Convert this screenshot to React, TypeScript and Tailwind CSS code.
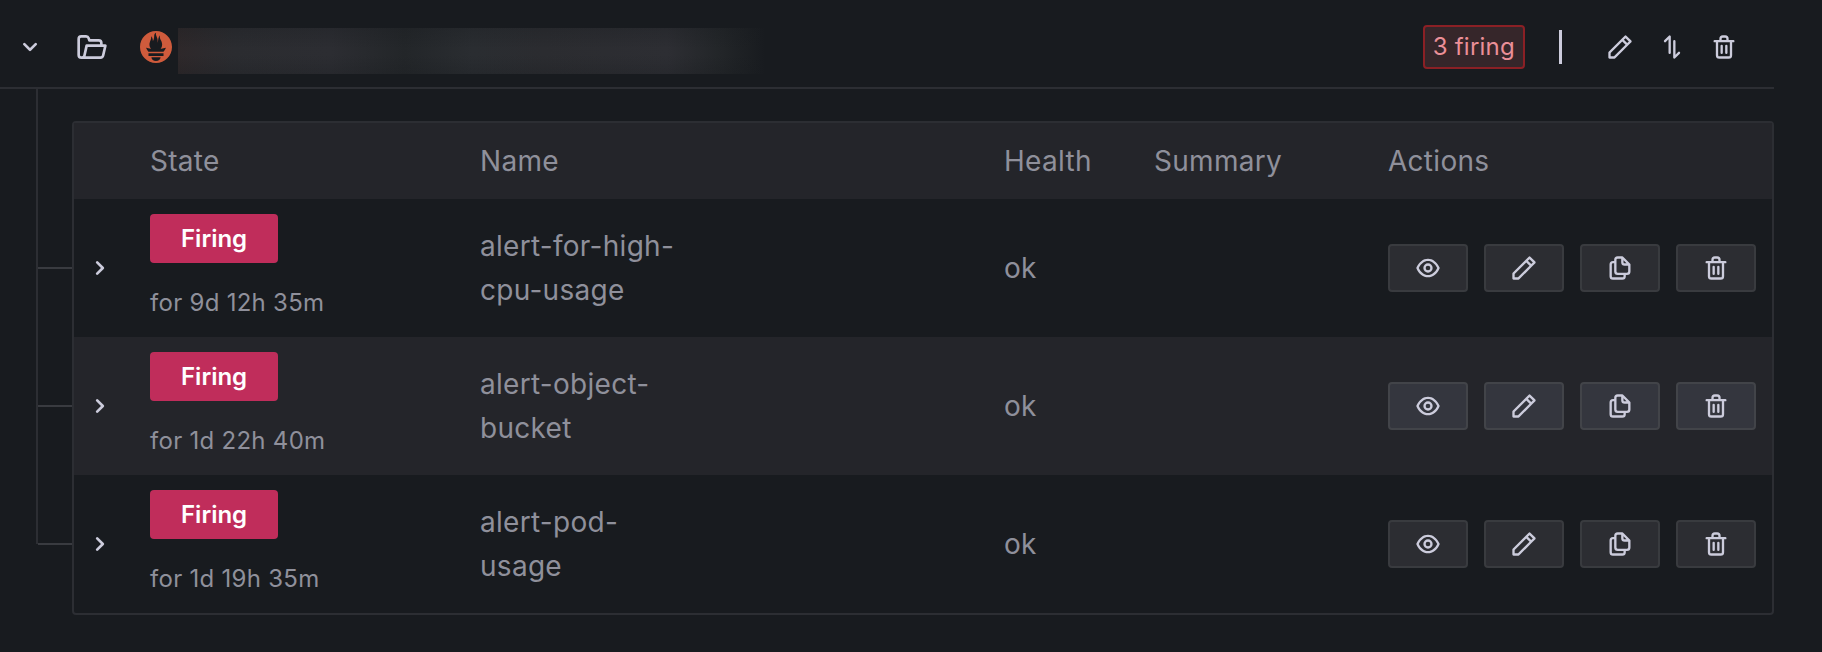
import React from "react";
import { SiPrometheus } from "react-icons/si";

const ICONS = {
  angleDown:
    "M17,9.17a1,1,0,0,0-1.41,0L12,12.71,8.46,9.17a1,1,0,0,0-1.41,0,1,1,0,0,0,0,1.42l4.24,4.24a1,1,0,0,0,1.42,0L17,10.59A1,1,0,0,0,17,9.17Z",
  angleRight:
    "M14.83,11.29,10.59,7.05a1,1,0,0,0-1.42,0,1,1,0,0,0,0,1.41L12.71,12,9.17,15.54a1,1,0,0,0,0,1.41,1,1,0,0,0,.71.29,1,1,0,0,0,.71-.29l4.24-4.24A1,1,0,0,0,14.83,11.29Z",
  folderOpen:
    "M22.78,10.37A1,1,0,0,0,22,10H20V9a3,3,0,0,0-3-3H10.72l-.31-1A3,3,0,0,0,7.56,3H4A3,3,0,0,0,1,6V18a3,3,0,0,0,3,3H18.4a3,3,0,0,0,2.92-2.35L23,11.22A1,1,0,0,0,22.78,10.37ZM5.37,18.22a1,1,0,0,1-1,.78H4a1,1,0,0,1-1-1V6A1,1,0,0,1,4,5H7.56a1,1,0,0,1,.95.68l.54,1.64A1,1,0,0,0,10,8h7a1,1,0,0,1,1,1v1H8a1,1,0,0,0-1,.78Zm14,0a1,1,0,0,1-1,.78H7.21a1.42,1.42,0,0,0,.11-.35L8.8,12h12Z",
  eye: "M21.92,11.6C19.9,6.91,16.1,4,12,4S4.1,6.91,2.08,11.6a1,1,0,0,0,0,.8C4.1,17.09,7.9,20,12,20s7.9-2.91,9.92-7.6A1,1,0,0,0,21.92,11.6ZM12,18c-3.17,0-6.17-2.29-7.9-6C5.83,8.29,8.83,6,12,6s6.17,2.29,7.9,6C18.17,15.71,15.17,18,12,18ZM12,8a4,4,0,1,0,4,4A4,4,0,0,0,12,8Zm0,6a2,2,0,1,1,2-2A2,2,0,0,1,12,14Z",
  pen: "M22,7.24a1,1,0,0,0-.29-.71L17.47,2.29A1,1,0,0,0,16.76,2a1,1,0,0,0-.71.29L13.22,5.12h0L2.29,16.05a1,1,0,0,0-.29.71V21a1,1,0,0,0,1,1H7.24A1,1,0,0,0,8,21.71L18.87,10.78h0L21.71,8a1.19,1.19,0,0,0,.22-.33,1,1,0,0,0,0-.24.7.7,0,0,0,0-.14ZM6.83,20H4V17.17l9.93-9.93,2.83,2.83ZM18.17,8.66,15.34,5.83l1.42-1.41,2.82,2.82Z",
  copy: "M21,8.94a1.31,1.31,0,0,0-.06-.27l0-.09a1.07,1.07,0,0,0-.19-.28h0l-6-6h0a1.07,1.07,0,0,0-.28-.19.32.32,0,0,0-.09,0A.88.88,0,0,0,14.05,2H10A3,3,0,0,0,7,5V6H6A3,3,0,0,0,3,9V19a3,3,0,0,0,3,3h8a3,3,0,0,0,3-3V18h1a3,3,0,0,0,3-3V9S21,9,21,8.94ZM15,5.41,17.59,8H16a1,1,0,0,1-1-1ZM15,19a1,1,0,0,1-1,1H6a1,1,0,0,1-1-1V9A1,1,0,0,1,6,8H7v7a3,3,0,0,0,3,3h5Zm4-4a1,1,0,0,1-1,1H10a1,1,0,0,1-1-1V5a1,1,0,0,1,1-1h3V7a3,3,0,0,0,3,3h3Z",
  trash:
    "M10,18a1,1,0,0,0,1-1V11a1,1,0,0,0-2,0v6A1,1,0,0,0,10,18ZM20,6H16V5a3,3,0,0,0-3-3H11A3,3,0,0,0,8,5V6H4A1,1,0,0,0,4,8H5V19a3,3,0,0,0,3,3h8a3,3,0,0,0,3-3V8h1a1,1,0,0,0,0-2ZM10,5a1,1,0,0,1,1-1h2a1,1,0,0,1,1,1V6H10Zm7,14a1,1,0,0,1-1,1H8a1,1,0,0,1-1-1V8H17Zm-3-1a1,1,0,0,0,1-1V11a1,1,0,0,0-2,0v6A1,1,0,0,0,14,18Z",
  reorder:
    "M10.4,2.08a1,1,0,0,0-1.09.21l-4,4a1,1,0,0,0,1.42,1.42L9,5.41V17a1,1,0,0,0,2,0V3A1,1,0,0,0,10.4,2.08ZM18.71,16.29a1,1,0,0,0-1.42,0L15,18.59V7a1,1,0,0,0-2,0V21a1,1,0,0,0,.62.92A.84.84,0,0,0,14,22a1,1,0,0,0,.71-.29l4-4A1,1,0,0,0,18.71,16.29Z",
};

type IconName = keyof typeof ICONS;

function Icon({ name, className = "size-7" }: { name: IconName; className?: string }) {
  return (
    <svg viewBox="0 0 24 24" fill="currentColor" aria-hidden="true" className={`shrink-0 ${className}`}>
      <path d={ICONS[name]} />
    </svg>
  );
}

const RULES = [
  { name: ["alert-for-high-", "cpu-usage"], since: "for 9d 12h 35m", health: "ok" },
  { name: ["alert-object-", "bucket"], since: "for 1d 22h 40m", health: "ok" },
  { name: ["alert-pod-", "usage"], since: "for 1d 19h 35m", health: "ok" },
];

const ROW_ACTIONS: { icon: IconName; label: string }[] = [
  { icon: "eye", label: "View" },
  { icon: "pen", label: "Edit" },
  { icon: "copy", label: "Copy" },
  { icon: "trash", label: "Delete" },
];

const GROUP_ACTIONS: { icon: IconName; label: string }[] = [
  { icon: "pen", label: "Edit rule group" },
  { icon: "reorder", label: "Reorder rules" },
  { icon: "trash", label: "Delete rule group" },
];

function GroupHeader() {
  return (
    <header className="flex h-[89px] items-center border-b-2 border-[#2c2e33] pt-[7px] text-[#ccccdc]">
      <button type="button" aria-label="Collapse rule group" className="ml-3.5">
        <Icon name="angleDown" className="size-8" />
      </button>
      <Icon name="folderOpen" className="ml-[30px] size-8" />
      <SiPrometheus aria-hidden="true" className="ml-8 size-8 shrink-0 text-[#cf5b3c]" />
      <div className="mt-2 ml-1.5 h-[46px] w-[612px] bg-[linear-gradient(to_right,#2e282a_0%,#2b2c30_9%,#2c2d32_25%,#232629_37%,#2a2d31_48%,#2b2c30_60%,#2d2e33_80%,#222528_89%,#181b1f_96%)]">
        <div className="size-full bg-[linear-gradient(to_bottom,#181b1f44,transparent_45%,transparent_60%,#181b1f44)]" />
      </div>
      <span className="ml-auto flex h-11 items-center rounded border-2 border-[#8b2025] bg-[#36262a] px-2 text-2xl tracking-[0.01em] text-[#eb8f98]">
        3 firing
      </span>
      <div className="ml-[34px] h-[34px] w-[3px] bg-[#ccccdc]" />
      <div className="mr-9 ml-11 flex gap-6">
        {GROUP_ACTIONS.map((a) => (
          <button key={a.icon} type="button" aria-label={a.label}>
            <Icon name={a.icon} />
          </button>
        ))}
      </div>
    </header>
  );
}

export default function App() {
  return (
    <main className="min-h-screen bg-[#181b1f] pr-12 font-['Inter',sans-serif] text-[28px] leading-[44px] tracking-[0.01em] text-[#8f909b]">
      <GroupHeader />
      <section className="relative pt-8 pl-[72px]">
        <div className="absolute top-0 bottom-[71px] left-9 w-0.5 bg-[#2c2e33]" />
        <div className="rounded border-2 border-[#2c2e33]">
          <table className="w-full table-fixed border-collapse text-left">
            <colgroup>
              <col className="w-[60px]" />
              <col className="w-[330px]" />
              <col />
              <col className="w-[150px]" />
              <col className="w-[234px]" />
              <col className="w-[400px]" />
            </colgroup>
            <thead>
              <tr className="h-[76px] bg-[#24252a]">
                <th aria-label="Expand" />
                <th className="px-4 font-normal">State</th>
                <th className="px-4 font-normal">Name</th>
                <th className="px-4 font-normal">Health</th>
                <th className="px-4 font-normal">Summary</th>
                <th className="px-4 font-normal">Actions</th>
              </tr>
            </thead>
            <tbody>
              {RULES.map((rule) => (
                <tr key={rule.since} className="group h-[138px] even:bg-[#24252a]">
                  <td className="relative p-0">
                    <div className="absolute top-1/2 -left-9 h-0.5 w-[34px] -translate-y-1/2 bg-[#393b40]" />
                    <button type="button" aria-label="Expand row" className="ml-2.5 block text-[#ccccdc]">
                      <Icon name="angleRight" className="size-8" />
                    </button>
                  </td>
                  <td className="px-4 pt-0 pb-0.5">
                    <div className="flex flex-col items-start gap-[22px]">
                      <span className="rounded bg-[#c02d5b] px-[31px] text-2xl leading-[49px] font-semibold tracking-normal text-white">
                        Firing
                      </span>
                      <span className="text-2xl leading-9">{rule.since}</span>
                    </div>
                  </td>
                  <td className="px-4 py-0">
                    {rule.name[0]}
                    <br />
                    {rule.name[1]}
                  </td>
                  <td className="px-4 py-0">{rule.health}</td>
                  <td className="px-4 py-0" />
                  <td className="px-4 py-0">
                    <div className="flex gap-4">
                      {ROW_ACTIONS.map((a) => (
                        <button
                          key={a.icon}
                          type="button"
                          aria-label={a.label}
                          className="flex h-12 w-20 items-center justify-center rounded border-2 border-[#393b3f] bg-[#2c2d32] text-[#ccccdc] group-even:border-[#424449] group-even:bg-[#34363e]"
                        >
                          <Icon name={a.icon} />
                        </button>
                      ))}
                    </div>
                  </td>
                </tr>
              ))}
            </tbody>
          </table>
        </div>
      </section>
    </main>
  );
}
